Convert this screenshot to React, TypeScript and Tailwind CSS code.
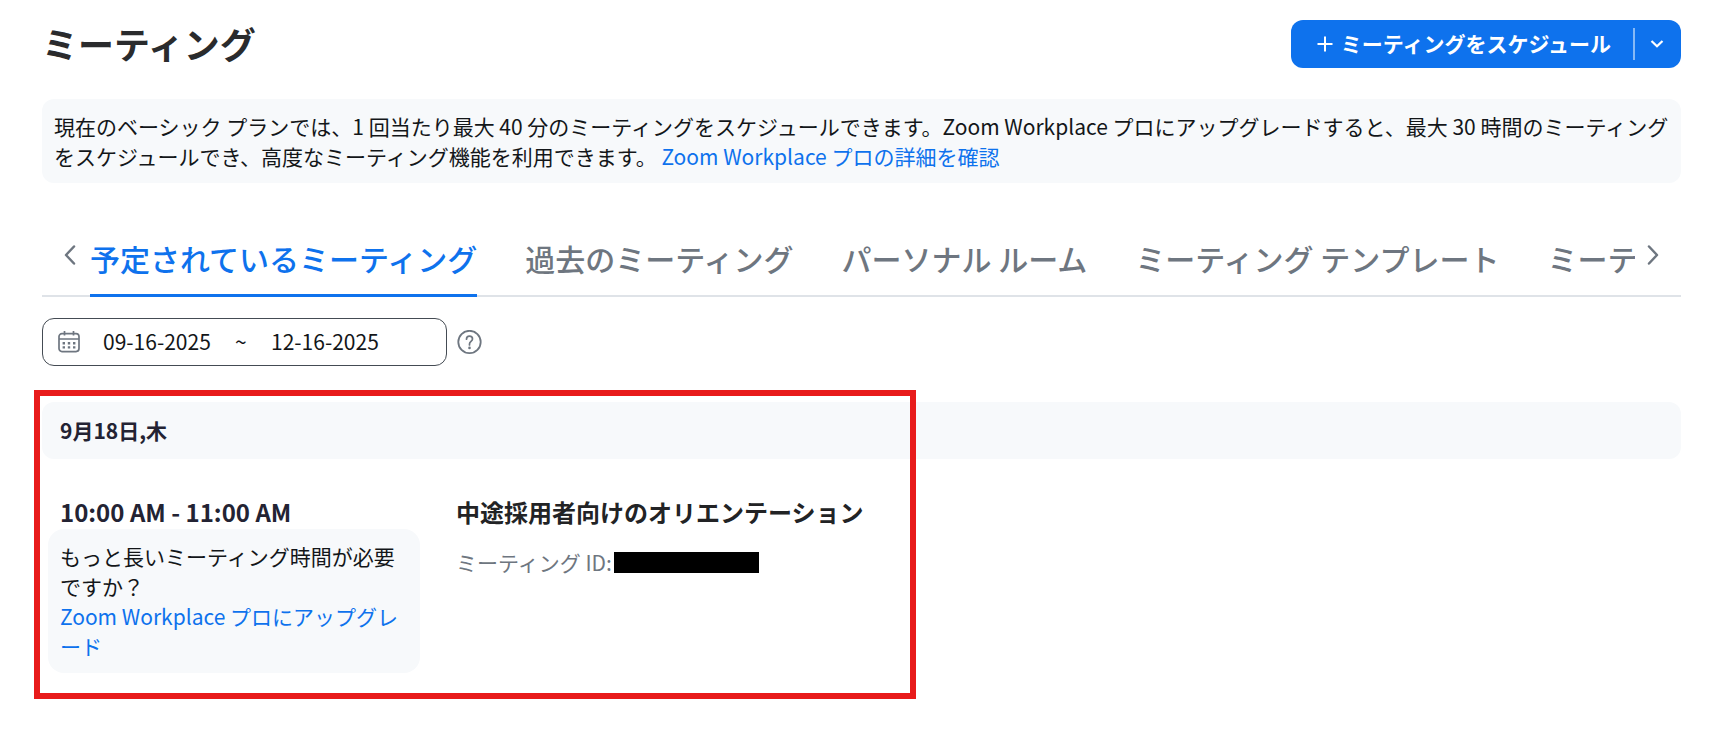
import { useState } from 'react';
import type { ReactNode } from 'react';

const tabs = [
  '予定されているミーティング',
  '過去のミーティング',
  'パーソナル ルーム',
  'ミーティング テンプレート',
  'ミーティングの要約',
];

const meetings = [
  {
    date: '9月18日,木',
    time: '10:00 AM - 11:00 AM',
    topic: '中途採用者向けのオリエンテーション',
  },
];

const CalendarIcon = () => (
  <svg width="22" height="22" viewBox="0 0 22 22" fill="none" stroke="currentColor" aria-hidden="true">
    <rect x="1" y="2.6" width="20" height="18" rx="3" strokeWidth="1.7" />
    <path d="M1 8h20M6.5 0v4.4M15.5 0v4.4" strokeWidth="1.7" />
    <path
      d="M4.6 12.2h2.4M9.8 12.2h2.4M15 12.2h2.4M4.6 16.4h2.4M9.8 16.4h2.4M15 16.4h2.4"
      strokeWidth="2.4"
    />
  </svg>
);

const HelpIcon = () => (
  <svg width="25" height="25" viewBox="0 0 25 25" fill="none" stroke="currentColor" aria-hidden="true">
    <circle cx="12.5" cy="12" r="11.2" strokeWidth="1.8" />
    <path
      d="M9.5 9.2c0-1.9 1.2-3.1 3-3.1s3 1.2 3 2.9c0 2.3-3 2.5-3 4.9v1"
      strokeWidth="1.7"
      strokeLinecap="round"
    />
    <circle cx="12.5" cy="17.9" r="1.3" fill="currentColor" stroke="none" />
  </svg>
);

const ScrollButton = ({ label, path }: { label: string; path: string }) => (
  <button type="button" aria-label={label} className="mb-4 flex shrink-0 items-center text-[#6e7680]">
    <svg width="12" height="20" viewBox="0 0 12 20" fill="none" stroke="currentColor" strokeWidth="2.5">
      <path d={path} strokeLinecap="round" strokeLinejoin="round" />
    </svg>
  </button>
);

const ProLink = ({ children }: { children: ReactNode }) => (
  <a href="#pro" className="text-[#0e72ed]">
    {children}
  </a>
);

const Header = () => (
  <header className="flex items-start justify-between">
    <h1 className="text-[36px] leading-[46px] font-bold text-[#2a2b2d]">ミーティング</h1>
    <div className="flex h-12 items-center rounded-xl bg-[#0e72ed] text-white">
      <button type="button" className="flex h-full items-center gap-2 pr-[22px] pl-[26px] text-[21px] font-bold">
        <svg width="16" height="16" viewBox="0 0 16 16" stroke="currentColor" strokeWidth="2" aria-hidden="true">
          <path d="M8 0.5v15M0.5 8h15" />
        </svg>
        ミーティングをスケジュール
      </button>
      <span className="h-8 w-0.5 bg-[#86b9f6]" />
      <button type="button" aria-label="その他のオプション" className="flex h-full items-center pr-[17px] pl-[15px]">
        <svg width="14" height="8" viewBox="0 0 14 8" fill="none" stroke="currentColor" strokeWidth="2.2">
          <path d="M1.5 1L7 6.3L12.5 1" />
        </svg>
      </button>
    </div>
  </header>
);

const Tabs = () => {
  const [active, setActive] = useState(0);

  return (
    <div className="flex items-stretch border-b-2 border-[#dfe3e8] px-[22px]">
      <ScrollButton label="前のタブ" path="M10 1.5L2 10l8 8.5" />
      <div role="tablist" className="-mb-0.5 ml-3.5 flex min-w-0 flex-1 gap-12 overflow-hidden">
        {tabs.map((tab, index) => (
          <button
            key={tab}
            type="button"
            role="tab"
            aria-selected={index === active}
            onClick={() => setActive(index)}
            className={`shrink-0 border-b-3 pt-1 pb-3 text-[30px] leading-12 font-medium whitespace-nowrap ${
              index === active
                ? 'border-[#0e72ed] text-[#0e72ed]'
                : 'border-transparent text-[#6e7680]'
            }`}
          >
            {tab}
          </button>
        ))}
      </div>
      <div className="ml-3 flex">
        <ScrollButton label="次のタブ" path="M2 1.5L10 10l-8 8.5" />
      </div>
    </div>
  );
};

const DateRange = () => (
  <div className="mt-[21px] flex items-center gap-2.5">
    <div className="flex h-12 w-[405px] items-center rounded-xl border border-[#444b53] pl-[15px] text-[21px] text-[#131619]">
      <span className="text-[#6e7680]">
        <CalendarIcon />
      </span>
      <input
        type="text"
        aria-label="開始日"
        defaultValue="09-16-2025"
        className="ml-[23px] w-[116px] bg-transparent outline-none"
      />
      <span className="w-[52px] pl-4">~</span>
      <input
        type="text"
        aria-label="終了日"
        defaultValue="12-16-2025"
        className="w-[116px] bg-transparent outline-none"
      />
    </div>
    <button type="button" aria-label="ヘルプ" className="text-[#6e7680]">
      <HelpIcon />
    </button>
  </div>
);

const App = () => {
  return (
    <main lang="ja" className="bg-white pt-5 pr-[39px] pb-8 pl-[42px] font-['Noto_Sans_CJK_JP',sans-serif]">
      <Header />

      <p className="mt-[31px] rounded-xl bg-[#f7f9fb] p-3 text-[21px] leading-[30px] text-[#131619]">
        現在のベーシック プランでは、1 回当たり最大 40 分のミーティングをスケジュールできます。Zoom
        Workplace プロにアップグレードすると、最大 30 時間のミーティングをスケジュールでき、高度なミーティング機能を利用できます。{' '}
        <ProLink>Zoom Workplace プロの詳細を確認</ProLink>
      </p>

      <div className="mt-[47px]">
        <Tabs />
      </div>
      <DateRange />

      {meetings.map((meeting) => (
        <section key={meeting.date} className="relative mt-9">
          <h2 className="rounded-xl bg-[#f7f9fb] px-[18px] py-3 text-[21px] leading-[33px] font-bold text-[#232333]">
            {meeting.date}
          </h2>
          <div className="flex px-1.5 pt-9">
            <div className="w-[372px] shrink-0">
              <div className="px-3 text-2xl leading-[34px] font-bold text-[#232333]">{meeting.time}</div>
              <div className="rounded-2xl bg-[#f7f9fb] p-3 text-[21px] leading-[30px] text-[#131619]">
                <p>もっと長いミーティング時間が必要ですか？</p>
                <ProLink>Zoom Workplace プロにアップグレード</ProLink>
              </div>
            </div>
            <div className="ml-9">
              <h3 className="text-2xl leading-[34px] font-bold text-[#222325]">{meeting.topic}</h3>
              <p className="mt-4 flex items-center gap-0.5 text-[21px] leading-[34px] text-[#6e7680]">
                ミーティング ID:
                <span className="h-[21px] w-[145px] bg-black" />
              </p>
            </div>
          </div>
          <div className="pointer-events-none absolute -top-3 -bottom-[26px] -left-2 w-[882px] border-6 border-[#e81b1b]" />
        </section>
      ))}
    </main>
  );
};

export default App;
